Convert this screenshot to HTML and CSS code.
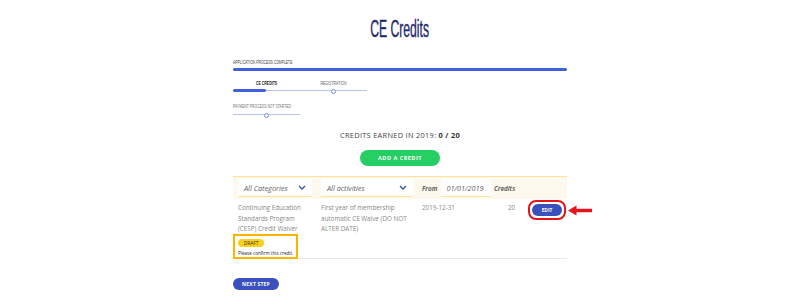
FILE: index.html
```html
<!DOCTYPE html>
<html lang="en">
<head>
    <meta charset="UTF-8">
    <title>CE Credits</title>
    <link rel="stylesheet" href="styles.css">
</head>
<body>
    <div class="page">
        <h1><span>CE Credits</span></h1>

        <div class="progress">
            <div class="step-label">APPLICATION PROCESS COMPLETE</div>
            <div class="bar-full"></div>

            <div class="substeps">
                <div class="substep-names">
                    <span class="current">CE CREDITS</span>
                    <span>REGISTRATION</span>
                </div>
                <div class="track">
                    <div class="track-fill"></div>
                    <div class="dot dot-reg"></div>
                </div>
            </div>

            <div class="step-label muted">PAYMENT PROCESS NOT STARTED</div>
            <div class="track short">
                <div class="dot dot-pay"></div>
            </div>
        </div>

        <p class="earned">CREDITS EARNED IN 2019: <strong>0 / 20</strong></p>
        <button class="btn-add">ADD A CREDIT</button>

        <div class="credits">
            <div class="filters">
                <div class="cell c1">
                    <div class="select">All Categories
                        <svg width="8" height="5" viewBox="0 0 8 5"><path d="M1 1l3 3 3-3" fill="none" stroke="#3b4fa8" stroke-width="1.3"/></svg>
                    </div>
                </div>
                <div class="cell c2">
                    <div class="select">All activities
                        <svg width="8" height="5" viewBox="0 0 8 5"><path d="M1 1l3 3 3-3" fill="none" stroke="#3b4fa8" stroke-width="1.3"/></svg>
                    </div>
                </div>
                <div class="cell c3">
                    <span class="flabel">From</span>
                    <span class="date">01/01/2019</span>
                </div>
                <div class="cell c4"><span class="flabel">Credits</span></div>
                <div class="cell c5"></div>
            </div>

            <div class="row">
                <div class="cell c1">
                    <div class="text">Continuing Education Standards Program (CESP) Credit Waiver</div>
                    <div class="draft-box">
                        <span class="draft">DRAFT</span>
                        <div class="confirm">Please confirm this credit.</div>
                    </div>
                </div>
                <div class="cell c2 text">First year of membership automatic CE Waive (DO NOT ALTER DATE)</div>
                <div class="cell c3 text">2019-12-31</div>
                <div class="cell c4 text num">20</div>
                <div class="cell c5">
                    <div class="edit-ring"><button class="btn-edit">EDIT</button></div>
                    <svg class="arrow" width="24" height="11" viewBox="0 0 24 11"><path d="M0 5.5L8.5 0.5V3.7H24V7.3H8.5V10.5Z" fill="#e3141c"/></svg>
                </div>
            </div>
        </div>

        <button class="btn-next">NEXT STEP</button>
    </div>
</body>
</html>
```

FILE: styles.css
```css
body {
    margin: 0;
    font-family: "Open Sans", Arial, sans-serif;
    background-color: white;
    color: #555;
}
.page {
    width: 334px;
    margin: 0 auto;
}
h1 {
    margin: 0;
    padding-top: 15px;
    height: 44px;
    line-height: 28px;
    text-align: center;
    font-family: "Liberation Sans", Arial, sans-serif;
    font-weight: normal;
    font-size: 23px;
    color: #1f2a6e;
}
h1 span {
    display: inline-block;
    transform: scaleX(0.53);
    -webkit-text-stroke: 0.4px #1f2a6e;
}
.step-label {
    font-family: "Liberation Sans", Arial, sans-serif;
    font-size: 5px;
    line-height: 6px;
    height: 6px;
    color: #444;
    white-space: nowrap;
    transform: scaleX(0.68);
    transform-origin: left center;
}
.step-label.muted {
    color: #777;
    margin-top: 11px;
}
.bar-full {
    height: 3px;
    margin-top: 3px;
    background-color: #3f5fdc;
    border-radius: 2px;
}
.substeps {
    width: 134px;
    margin-top: 9px;
}
.substep-names {
    display: flex;
    font-family: "Liberation Sans", Arial, sans-serif;
    font-size: 5px;
    line-height: 6px;
    color: #666;
}
.substep-names span {
    width: 67px;
    text-align: center;
    transform: scaleX(0.7);
}
.substep-names .current {
    font-weight: bold;
    color: #222;
}
.track {
    position: relative;
    height: 3px;
    margin-top: 3px;
    background: linear-gradient(#b8c4f0, #b8c4f0) center / 100% 1px no-repeat;
}
.track.short {
    width: 67px;
    margin-top: 4px;
}
.track-fill {
    width: 33px;
    height: 3px;
    background-color: #3f5fdc;
    border-radius: 2px;
}
.dot {
    position: absolute;
    top: -0.5px;
    width: 3px;
    height: 3px;
    border: 0.8px solid #7d92e0;
    border-radius: 50%;
    background-color: white;
}
.dot-reg {
    left: 98px;
}
.dot-pay {
    left: 31px;
}
.earned {
    margin: 13px 0 0;
    text-align: center;
    font-size: 7.4px;
    line-height: 12px;
    letter-spacing: 0.3px;
    color: #444;
}
.earned strong {
    color: #333;
}
.btn-add {
    display: block;
    margin: 9px auto 0;
    width: 80px;
    height: 16px;
    border: none;
    border-radius: 8px;
    background-color: #25cf63;
    color: white;
    font-family: "Open Sans", Arial, sans-serif;
    font-weight: bold;
    font-size: 5.5px;
    letter-spacing: 0.5px;
    padding: 0;
}
.credits {
    margin-top: 10px;
    border-top: 1.5px solid #fde39a;
    border-bottom: 1px solid #eaeaea;
}
.filters {
    display: flex;
    align-items: center;
    height: 22px;
    background-color: #fdf9ee;
}
.cell {
    box-sizing: border-box;
}
.c1 {
    width: 84px;
    padding-left: 5px;
}
.c2 {
    width: 100px;
    padding-left: 4px;
}
.c3 {
    width: 77px;
    padding-left: 5px;
}
.c4 {
    width: 34px;
}
.c5 {
    flex: 1;
}
.select {
    display: flex;
    justify-content: space-between;
    align-items: center;
    height: 18px;
    padding: 0 6px;
    background-color: white;
    border-bottom: 1.5px solid #fde39a;
    font-style: italic;
    font-size: 7.3px;
    color: #666;
}
.filters .c1 .select {
    width: 74px;
    box-sizing: border-box;
}
.filters .c2 .select {
    width: 92px;
    box-sizing: border-box;
}
.filters .c3 {
    display: flex;
    align-items: center;
    gap: 4px;
}
.flabel {
    font-style: italic;
    font-weight: bold;
    font-size: 6.3px;
    color: #666;
}
.date {
    display: inline-block;
    width: 50px;
    height: 18px;
    line-height: 18px;
    padding-left: 5px;
    box-sizing: border-box;
    background-color: white;
    border-bottom: 1.5px solid #fde39a;
    font-style: italic;
    font-size: 7.3px;
    color: #666;
}
.filters .c4 {
    display: flex;
    align-items: center;
}
.row {
    display: flex;
    align-items: flex-start;
    padding-top: 4px;
    height: 59px;
    box-sizing: border-box;
}
.text {
    font-size: 6.3px;
    line-height: 10.5px;
    color: #888;
}
.c1 .text {
    width: 74px;
}
.num {
    padding-left: 14px;
}
.draft-box {
    margin: -1px 0 0 -5px;
    width: 65px;
    height: 25px;
    box-sizing: border-box;
    border: 2px solid #f7b500;
    padding: 3px 0 0 3px;
}
.draft {
    display: block;
    width: 26px;
    height: 8px;
    line-height: 8px;
    border-radius: 4px;
    background-color: #f9d11b;
    text-align: center;
    font-size: 4.8px;
    color: #333;
}
.confirm {
    margin-top: 3px;
    font-size: 4.6px;
    line-height: 6px;
    color: #222;
    white-space: nowrap;
}
.row .c5 {
    position: relative;
    display: flex;
    align-items: center;
    margin-top: -3px;
}
.edit-ring {
    padding: 2px;
    border: 2px solid #e3141c;
    border-radius: 8px;
}
.btn-edit {
    display: block;
    width: 30px;
    height: 12px;
    padding: 0;
    border: none;
    border-radius: 6px;
    background-color: #3a50bd;
    color: white;
    font-family: "Open Sans", Arial, sans-serif;
    font-size: 4.8px;
    font-weight: bold;
}
.arrow {
    position: absolute;
    left: 40px;
    top: 5px;
}
.btn-next {
    display: block;
    margin-top: 19px;
    width: 46px;
    height: 12px;
    padding: 0;
    border: none;
    border-radius: 6px;
    background-color: #3a50bd;
    color: white;
    font-family: "Open Sans", Arial, sans-serif;
    font-size: 5px;
    font-weight: bold;
    letter-spacing: 0.2px;
}
```
